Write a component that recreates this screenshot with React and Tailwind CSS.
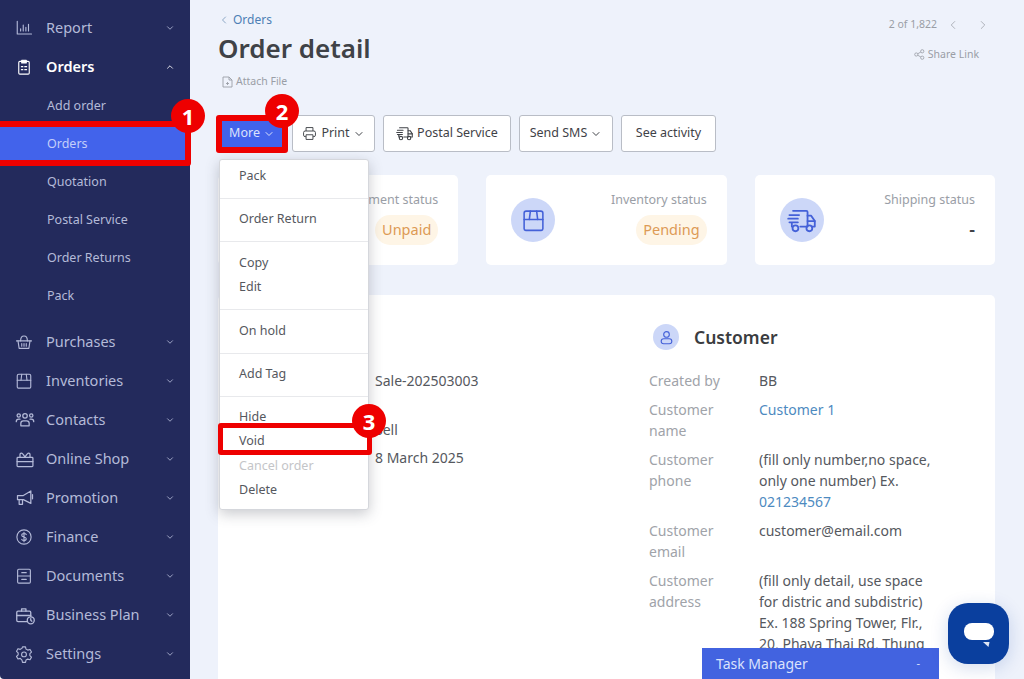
import React from "react";
import { ChevronDown, ChevronUp, ChevronLeft, ChevronRight } from "lucide-react";

const I = ({ children, size = 18, cls = "" }) => (
  <svg width={size} height={size} viewBox="0 0 24 24" fill="none" stroke="currentColor" strokeWidth="1.5" strokeLinecap="round" strokeLinejoin="round" className={cls}>{children}</svg>
);
const TruckGlyph = ({ size = 18, cls = "" }) => (
  <I size={size} cls={cls}>
    <path d="M5 4h11a1 1 0 0 1 1 1v12h-6" /><path d="M17 8h3l3 4.5V17h-2.5" /><path d="M17 12.5h6" />
    <circle cx="7" cy="18.5" r="2.4" /><circle cx="18.5" cy="18.5" r="2.4" />
    <path d="M2 7.5h8M1 10.5h8M2 13.5h7" /><path d="M4 17v-2.5" />
  </I>
);
const BoxGlyph = ({ size = 18, cls = "" }) => (
  <I size={size} cls={cls}>
    <path d="M5 3h14a2 2 0 0 1 2 2v15a1.5 1.5 0 0 1-1.5 1.5h-15A1.5 1.5 0 0 1 3 20V5a2 2 0 0 1 2-2z" /><path d="M3 11h18" /><path d="M9 3l-1 8M15 3l1 8" />
  </I>
);
const icons = {
  report: <I><path d="M3 3v17h19" /><path d="M7.5 16v-3M11 16V8M14.5 16v-5M18 16V7" /></I>,
  orders: <I><rect x="5" y="4.5" width="14" height="17" rx="1.5" /><path d="M9 3h6v3.5H9z" fill="currentColor" /><path d="M8.5 11.5h2M13 11.5h2.5M8.5 15.5h2M13 15.5h2.5" /></I>,
  purchases: <I><path d="M2 10.5h20" /><path d="M4 10.5l1.5 10h13l1.500-10" /><path d="M7.500 10.500c0-4 2-6.500 4.500-6.500s4.500 2.500 4.500 6.500" /><path d="M9 14v3.500M12 14v3.500M15 14v3.500" /></I>,
  inventories: <BoxGlyph />,
  contacts: <I size={20}><circle cx="12" cy="7" r="2.700" /><circle cx="4.500" cy="6.500" r="2" /><circle cx="19.500" cy="6.500" r="2" /><path d="M7 19v-3a3 3 0 0 1 3-3h4a3 3 0 0 1 3 3v3z" /><path d="M1.500 14a3 3 0 0 1 3-3H6M22.500 14a3 3 0 0 0-3-3H18" /></I>,
  shop: <I size={20}><rect x="2.500" y="10" width="19" height="11" rx="1" /><path d="M2.500 15h19" /><path d="M6 10V6.500a1.500 1.500 0 0 1 1.500-1.500c2 0 4.500 5 4.500 5s2.500-5 4.500-5A1.500 1.500 0 0 1 18 6.500V10" /></I>,
  promo: <I size={20}><path d="M3 9h7l9-5.500v15L10 14H3z" /><path d="M5 14v5.500h4V14" /><path d="M21 8v5" /></I>,
  finance: <I><circle cx="12" cy="12" r="9.500" /><path d="M15 8.800c-.5-1-1.600-1.500-3-1.500-1.700 0-3 .9-3 2.300 0 3.200 6 1.600 6 4.800 0 1.400-1.300 2.300-3 2.300-1.400 0-2.500-.5-3-1.500M12 5.800v12.400" /></I>,
  docs: <I><rect x="3.500" y="3" width="17" height="18.500" rx="1.500" /><path d="M3.500 12h17" /><path d="M9 7.500h6M9 16.500h6" /></I>,
  plan: <I size={21}><rect x="2" y="7" width="16" height="12" rx="1.500" /><path d="M7.500 7V4.500h5V7" /><path d="M2 12h16" /><circle cx="18" cy="17.500" r="4" fill="#232a5c" /><path d="M18 15.500v2l1.300 1" /></I>,
  settings: <I><path d="M10 2.500h4l.7 3 2.300 1.300 3-.9 2 3.500-2.200 2.100v2.600l2.200 2.100-2 3.500-3-.9-2.300 1.300-.7 3h-4l-.7-3L7 17.800l-3 .9-2-3.500 2.200-2.100v-2.600L2 8.400l2-3.500 3 .9 2.300-1.300z" /><circle cx="12" cy="12.500" r="3.200" /></I>,
};

const mainNav = [
  ["Purchases", "purchases"], ["Inventories", "inventories"], ["Contacts", "contacts"], ["Online Shop", "shop"], ["Promotion", "promo"],
  ["Finance", "finance"], ["Documents", "docs"], ["Business Plan", "plan"], ["Settings", "settings"],
];
const sub = ["Add order", "Orders", "Quotation", "Postal Service", "Order Returns", "Pack"];

const NavRow = ({ label, icon, active }) => (
  <div className={`flex h-[39px] items-center pl-[15px] pr-[15px] ${active ? "text-white" : "text-[#b4bad8]"}`}>
    <span className="flex w-[31px] shrink-0 items-center">{icons[icon]}</span>
    <span className={`flex-1 text-[14.5px] ${active ? "font-semibold" : ""}`}>{label}</span>
    {active ? <ChevronUp size={10} strokeWidth={2} /> : <ChevronDown size={10} strokeWidth={2} />}
  </div>
);

const Sidebar = () => (
  <aside className="flex h-full w-[190px] shrink-0 flex-col rounded-bl-[4px] bg-[#232a5c] pt-[8.500px]">
    <NavRow label="Report" icon="report" />
    <NavRow label="Orders" icon="orders" active />
    <div className="mt-[1px] mb-[7px] flex flex-col">
      {sub.map((s) => (
        <div key={s} className={`flex h-[38px] items-center pl-[47px] text-[12.500px] ${s === "Orders" ? "bg-[#4263eb] text-[#c3cefa]" : "text-[#b4bad8]"}`}>{s}</div>
      ))}
    </div>
    {mainNav.map(([l, i]) => <NavRow key={l} label={l} icon={i} />)}
  </aside>
);

const Btn = ({ children, cls = "" }) => (
  <button className={`flex h-[37px] items-center justify-center gap-[3px] rounded-[3px] border border-[#b9bdc6] bg-white text-[12.500px] text-[#3f4247] ${cls}`}>{children}</button>
);

const StatusCard = ({ icon, label, children }) => (
  <div className="flex h-[90px] flex-1 items-center justify-between rounded-[5px] bg-white pl-[25px] pr-[20px]">
    <span className="flex h-[44px] w-[44px] items-center justify-center rounded-full bg-[#ccd7f8] text-[#4461d8]">{icon}</span>
    <div className="flex h-[60px] flex-col items-end pt-[1px]">
      <span className="text-[12.500px] leading-[18px] text-[#9a9ea6]">{label}</span>
      {children}
    </div>
  </div>
);

const Pill = ({ children }) => (
  <span className="mt-[6px] flex h-[30px] items-center rounded-full bg-[#fef5e6] px-[7px] text-[14.500px] text-[#dd9a55]">{children}</span>
);

const Row = ({ label, children }) => (
  <div className="flex text-[14px] leading-[21px]">
    <div className="w-[110px] shrink-0 text-[#a0a3a9]">{label}</div>
    <div className="whitespace-nowrap text-[#55585e]">{children}</div>
  </div>
);

const Section = ({ children, cls = "" }) => <div className={`border-b border-[#e8e9ec] pt-[9px] pb-[9px] ${cls}`}>{children}</div>;
const Item = ({ children, muted }) => (
  <div className={`flex h-[24.500px] items-center pl-[19px] text-[12.500px] ${muted ? "text-[#c4c5c8]" : "text-[#55585e]"}`}>{children}</div>
);

const Badge = ({ n, cls }) => (
  <span className={`absolute flex h-[34px] w-[34px] items-center justify-center rounded-full bg-[#ee0000] text-[22px] font-bold text-white ${cls}`}>{n}</span>
);

export default function App() {
  return (
    <div className="relative flex h-[679px] w-[1024px] overflow-hidden bg-white font-['Noto_Sans','Liberation_Sans',sans-serif]">
      <Sidebar />
      <main className="flex h-full flex-1 flex-col overflow-hidden bg-[#eef2fb] pl-[28px] pr-[29px]">
        <header className="flex h-[115px] shrink-0 justify-between">
          <div className="flex flex-col">
            <div className="mt-[12px] flex h-[16px] items-center gap-[3px] text-[12px] text-[#4d7fb5]">
              <ChevronLeft size={12} strokeWidth={1.500} className="text-[#6b8db3]" />Orders
            </div>
            <h1 className="mt-[3px] text-[26px] font-semibold leading-[34px] text-[#3f4247]">Order detail</h1>
            <div className="mt-[9px] flex items-center gap-[3px] pl-[4px] text-[10.500px] text-[#9a9ea6]">
              <svg width="11" height="12" viewBox="0 0 11 12" fill="none" stroke="currentColor" strokeWidth=".9"><path d="M1 1h6l3 3v7H1zM7 1v3h3M5.500 6v3M4 7.500h3" /></svg>
              Attach File
            </div>
          </div>
          <div className="flex flex-col items-end">
            <div className="mt-[17px] flex h-[16px] items-center text-[#9a9ea6]">
              <span className="text-[10.500px]">2 of 1,822</span>
              <ChevronLeft size={14} strokeWidth={1.300} className="ml-[9px]" />
              <ChevronRight size={14} strokeWidth={1.300} className="ml-[16px] mr-[5px]" />
            </div>
            <div className="mr-[16px] mt-[14px] flex items-center gap-[3px] text-[10.500px] text-[#9a9ea6]">
              <svg width="11" height="11" viewBox="0 0 24 24" fill="none" stroke="currentColor" strokeWidth="1.800"><circle cx="5" cy="12" r="3.500" /><circle cx="18" cy="5" r="3.500" /><circle cx="18" cy="19" r="3.500" /><path d="M8 10.500l7-4M8 13.500l7 4" /></svg>
              Share Link
            </div>
          </div>
        </header>

        <div className="flex shrink-0 items-center">
          <button className="ml-[4px] flex h-[26px] w-[60px] items-center justify-center gap-[3px] bg-[#4263eb] text-[12.500px] text-[#dbe2fc]">More<ChevronDown size={12} strokeWidth={2} /></button>
          <Btn cls="ml-[10px] w-[83px]">
            <svg width="15" height="15" viewBox="0 0 24 24" fill="none" stroke="currentColor" strokeWidth="1.500" className="mr-[1px]"><path d="M6.500 8V2.500h11V8" /><rect x="2.500" y="8" width="19" height="9" rx="2.500" /><path d="M6.500 14v7.500h11V14z" fill="white" /></svg>
            Print<ChevronDown size={12} strokeWidth={2} />
          </Btn>
          <Btn cls="ml-[8px] w-[128px] gap-[4px]"><TruckGlyph size={17} />Postal Service</Btn>
          <Btn cls="ml-[8px] w-[94px]">Send SMS<ChevronDown size={12} strokeWidth={2} /></Btn>
          <Btn cls="ml-[8px] w-[95px]">See activity</Btn>
        </div>

        <div className="mt-[23px] flex shrink-0 gap-[28px]">
          <StatusCard label="Payment status" icon={<span />}><Pill>Unpaid</Pill></StatusCard>
          <StatusCard label="Inventory status" icon={<BoxGlyph size={25} />}><Pill>Pending</Pill></StatusCard>
          <StatusCard label="Shipping status" icon={<TruckGlyph size={29} />}>
            <span className="mt-[7px] text-[18px] font-semibold leading-[26px] text-[#3f4247]">-</span>
          </StatusCard>
        </div>

        <section className="mt-[30px] flex flex-1 rounded-t-[5px] bg-white">
          <div className="w-[431px] shrink-0 pl-[157px] pt-[75px] text-[14px] leading-[21px] text-[#55585e]">
            <div>Sale-202503003</div>
            <div className="mt-[28px]">Sell</div>
            <div className="mt-[7px]">8 March 2025</div>
          </div>
          <div className="flex-1 overflow-hidden">
            <div className="mt-[29px] ml-[4px] flex items-center gap-[15px]">
              <span className="flex h-[26px] w-[26px] items-center justify-center rounded-full bg-[#ccd7f8] text-[#4461d8]">
                <svg width="15" height="15" viewBox="0 0 24 24" fill="none" stroke="currentColor" strokeWidth="1.800"><circle cx="12" cy="7" r="4.500" /><rect x="3.500" y="14" width="17" height="8" rx="4" /></svg>
              </span>
              <span className="text-[17.500px] font-semibold leading-[26px] text-[#3a3c40]">Customer</span>
            </div>
            <div className="mt-[20px] flex flex-col gap-[8px]">
              <Row label="Created by">BB</Row>
              <Row label={<>Customer<br />name</>}><span className="text-[#4d8abf]">Customer 1</span></Row>
              <Row label={<>Customer<br />phone</>}>(fill only number,no space,<br />only one number) Ex.<br /><span className="text-[#4d8abf]">021234567</span></Row>
              <Row label={<>Customer<br />email</>}>customer@email.com</Row>
              <Row label={<>Customer<br />address</>}>(fill only detail, use space<br />for distric and subdistric)<br />Ex. 188 Spring Tower, Flr.,<br />20, Phaya Thai Rd, Thung</Row>
            </div>
          </div>
        </section>
      </main>

      {/* open dropdown */}
      <div className="absolute left-[219px] top-[159px] w-[150px] rounded-[3px] border border-[#d5d7dc] bg-white shadow-[0_4px_14px_rgba(60,64,80,0.28)]">
        <Section cls="!pt-[4px]"><Item>Pack</Item></Section>
        <Section><Item>Order Return</Item></Section>
        <Section><Item>Copy</Item><Item>Edit</Item></Section>
        <Section><Item>On hold</Item></Section>
        <Section><Item>Add Tag</Item></Section>
        <div className="pt-[8px] pb-[6px]">
          <Item>Hide</Item><Item>Void</Item><Item muted>Cancel order</Item><Item>Delete</Item>
        </div>
      </div>

      {/* floating widgets */}
      <div className="absolute left-[702px] top-[648px] flex h-[31px] w-[237px] items-center justify-between bg-[#4263e0] pl-[14px] pr-[19px] text-[14px] text-[#dbe2fc]">
        <span>Task Manager</span><span className="text-[11px]">-</span>
      </div>
      <div className="absolute left-[948px] top-[603px] flex h-[61px] w-[61px] items-center justify-center rounded-[20px] bg-[#0a3f9e] shadow-[0_4px_18px_rgba(10,63,158,0.18)]">
        <svg width="32" height="26" viewBox="0 0 32 26"><rect x="1" y="2" width="30" height="17" rx="8" fill="white" /><path d="M20 21h6.500l-1 5z" fill="#dfe6f5" /></svg>
      </div>

      {/* tutorial annotations */}
      <div className="absolute left-[-6px] top-[121px] h-[45px] w-[197px] rounded-[3px] border-x-[6px] border-y-[6px] border-[#ee0000]" />
      <div className="absolute left-[216px] top-[115px] h-[38px] w-[72px] rounded-[3px] border-[6px] border-[#ee0000]" />
      <div className="absolute left-[218px] top-[423px] h-[32px] w-[154px] rounded-[3px] border-[5px] border-[#ee0000]" />
      <Badge n="1" cls="left-[171px] top-[99px]" />
      <Badge n="2" cls="left-[265px] top-[94px]" />
      <Badge n="3" cls="left-[352px] top-[404px]" />
    </div>
  );
}
